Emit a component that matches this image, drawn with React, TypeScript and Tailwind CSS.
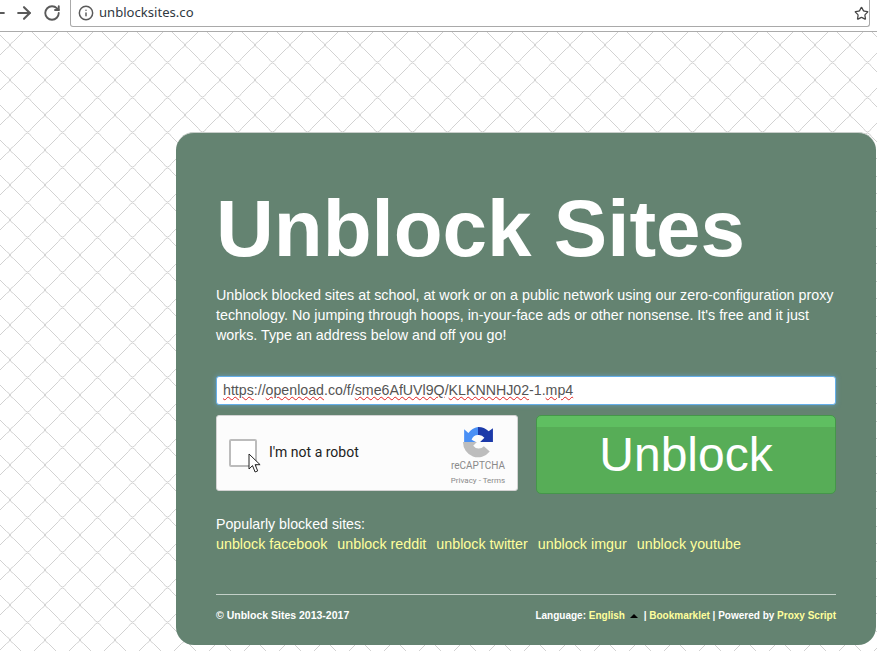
import React from "react";
import { ArrowLeft, ArrowRight, Info, RotateCw, Star } from "lucide-react";

const links = ["facebook", "reddit", "twitter", "imgur", "youtube"];

function Toolbar() {
  return (
    <div className="flex h-8 items-start border-b border-[#ababab] bg-white pr-[7px]">
      <div className="flex h-[26px] w-[70px] shrink-0 items-center overflow-hidden text-[#5a5a5a]">
        <ArrowLeft size={20} strokeWidth={2.5} className="ml-[-12px] shrink-0" />
        <ArrowRight size={20} strokeWidth={2.5} className="ml-[6px] shrink-0" />
        <RotateCw size={18} strokeWidth={2.5} className="ml-[9px] shrink-0" />
      </div>
      <div className="flex h-[27px] flex-1 items-center rounded-b-[3px] border-x border-b border-[#a9a9a9] pl-[7px] pr-[0px]">
        <Info size={16} strokeWidth={2.2} className="text-[#5a5a5a]" />
        <span className="ml-[5px] flex-1 font-['Noto_Sans',sans-serif] text-[13.1px] text-[#303942]">
          unblocksites.co
        </span>
        <Star size={15} strokeWidth={2} className="text-[#444]" />
      </div>
    </div>
  );
}

function Captcha() {
  return (
    <div className="relative flex h-[76px] w-[302px] items-center rounded-[3px] border border-[#d3d3d3] bg-[#fcfcfc]">
      <div className="ml-[12px] h-[28px] w-[28px] rounded-[2px] border-2 border-[#bcbcbc] bg-white" />
      <span className="ml-[12px] pb-[2px] font-['Roboto',sans-serif] text-[14px] text-[#222]">I'm not a robot</span>
      <div className="ml-auto mr-[11px] flex w-[56px] flex-col items-center self-start pt-[10px]">
        <svg width="32" height="32" viewBox="0 0 30 30">
          <path d="M2 15V3l4 3.5A14 14 0 0 1 15 1v7.5A6.5 6.5 0 0 0 9 13l4 2Z" fill="#4a90f5" />
          <path d="M15 1a14 14 0 0 1 10 4l4-3v13H17l4-4a6.5 6.5 0 0 0-6-2.5Z" fill="#1c3aa9" />
          <path d="M1 15h13l-3.5 3.5A6.5 6.5 0 0 0 20.5 19l5.5 5A14 14 0 0 1 1 15Z" fill="#bdbdbd" />
        </svg>
        <span className="mt-[1px] whitespace-nowrap font-['Roboto',sans-serif] text-[10px] leading-[13px] text-[#8a8a8a]">
          reCAPTCHA
        </span>
        <span className="mt-[4px] whitespace-nowrap font-['Roboto',sans-serif] text-[8px] leading-[10px] text-[#8a8a8a]">
          Privacy - Terms
        </span>
      </div>
      {/* mouse pointer sitting over the checkbox */}
      <svg className="absolute left-[31px] top-[37px]" width="14" height="21" viewBox="0 0 14 21">
        <path d="M1 1v15l3.5-3.4 2.6 6.4 2.6-1.1-2.6-6.2h5Z" fill="#fff" stroke="#222" strokeWidth="1" />
      </svg>
    </div>
  );
}

export default function App() {
  return (
    <div className="h-[651px] w-[877px] overflow-hidden bg-white bg-[url('data:image/svg+xml,%3Csvg%20xmlns=%22http://www.w3.org/2000/svg%22%20width=%2235%22%20height=%2235%22%3E%3Cpath%20fill=%22none%22%20stroke=%22%23d2d2d2%22%20d=%22M3.5%203.5L13.5%2013.5Q17.5%2020.5%2021.5%2013.5L31.5%203.5M3.5%2031.5L13.5%2021.5Q17.5%2014.5%2021.5%2021.5L31.5%2031.5M3.5%20-3.5Q-3%200%203.5%203.5M31.5%20-3.5Q38%200%2031.5%203.5M3.5%2031.5Q-3%2035%203.5%2038.5M31.5%2031.5Q38%2035%2031.5%2038.5%22/%3E%3C/svg%3E')] bg-[position:10px_10px] font-['Liberation_Sans',Arial,sans-serif]">
      <Toolbar />
      <div className="ml-[176px] mt-[100px] h-[513px] w-[700px] rounded-[18px] border-t border-[#c9cfcb] bg-[#648371] px-10 pt-[56px] text-white">
        <h1 className="text-[80px] font-bold leading-none">Unblock Sites</h1>
        <p className="mt-4 text-[14.3px] leading-5">
          Unblock blocked sites at school, at work or on a public network using our zero-configuration proxy
          technology. No jumping through hoops, in-your-face ads or other nonsense. It's free and it just works. Type
          an address below and off you go!
        </p>
        <div className="mt-[31px] flex h-[29px] items-center rounded-[3px] border border-[#66afe9] bg-white px-[6px] text-[14.2px] text-[#555] shadow-[0_0_5px_#66afe999]">
          <span className="underline decoration-[#e02020] decoration-wavy decoration-1">https</span>://
          <span className="underline decoration-[#e02020] decoration-wavy decoration-1">openload</span>.co/f/
          <span className="underline decoration-[#e02020] decoration-wavy decoration-1">sme6AfUVl9Q</span>/
          <span className="underline decoration-[#e02020] decoration-wavy decoration-1">KLKNNHJ02</span>-1.
          <span className="underline decoration-[#e02020] decoration-wavy decoration-1">mp4</span>
        </div>
        <div className="mt-[10px] flex items-start justify-between">
          <Captcha />
          <button className="h-[79px] w-[300px] rounded-[5px] border border-[#45964a] bg-[linear-gradient(#5fbf61_0,#5fbf61_11px,#57ad57_11px)] text-[48px] leading-none text-white">
            Unblock
          </button>
        </div>
        <div className="mt-5 text-[14.2px] leading-5">Popularly blocked sites:</div>
        <div className="flex gap-[10px] text-[14.3px] leading-5 text-[#ffff9c]">
          {links.map((name) => (
            <a key={name}>unblock {name}</a>
          ))}
        </div>
        <div className="mt-10 flex items-center justify-between border-t border-[#c3d0c8] pt-[14px] text-[10.5px] font-bold leading-[13px]">
          <span>© Unblock Sites 2013-2017</span>
          <span className="flex items-center whitespace-pre text-[10px]">
            Language: <a className="text-[#ffff9c]">English</a>
            <span className="ml-[5px] mr-[3px] h-0 w-0 border-x-[4px] border-b-[4px] border-x-transparent border-b-black" />
            {" | "}
            <a className="text-[#ffff9c]">Bookmarklet</a>
            {" | Powered by "}
            <a className="text-[#ffff9c]">Proxy Script</a>
          </span>
        </div>
      </div>
    </div>
  );
}
